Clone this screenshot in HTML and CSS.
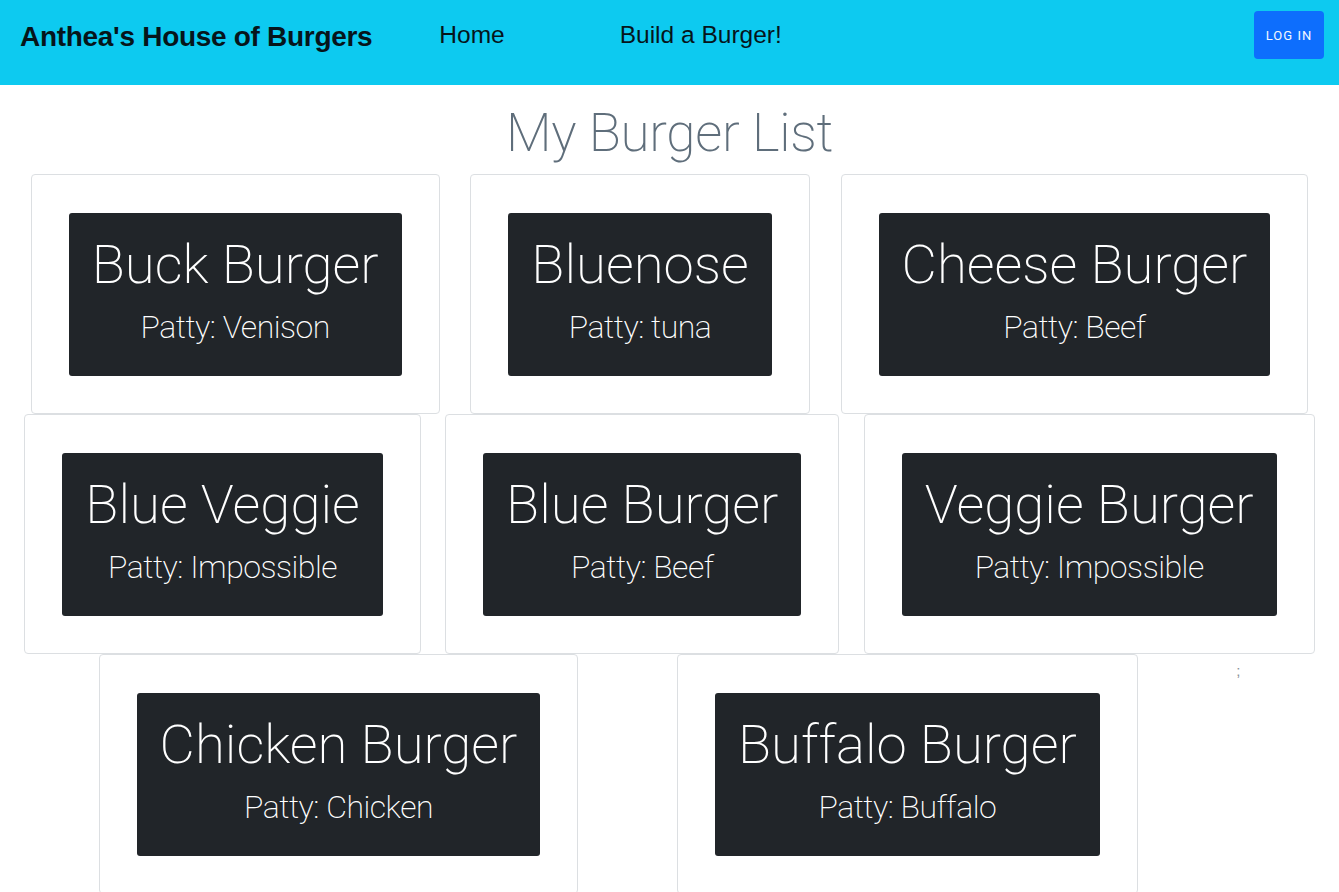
FILE: index.html
```html
<!DOCTYPE html>
<html lang="en">
<head>
<meta charset="utf-8">
<title>Anthea's House of Burgers</title>
<link rel="stylesheet" href="styles.css">
</head>
<body>
<nav class="navbar">
  <a class="brand" href="#">Anthea's House of Burgers</a>
  <ul class="nav-links">
    <li><a href="#" class="nav-link home">Home</a></li>
    <li><a href="#" class="nav-link">Build a Burger!</a></li>
  </ul>
  <button class="login">Log in</button>
</nav>
<main>
  <h1 class="page-title">My Burger List</h1>
  <div class="burger-list">
    <div class="card"><div class="burger"><h2 class="burger-name">Buck Burger</h2><p class="patty">Patty: Venison</p></div></div>
    <div class="card"><div class="burger"><h2 class="burger-name">Bluenose</h2><p class="patty">Patty: tuna</p></div></div>
    <div class="card"><div class="burger"><h2 class="burger-name">Cheese Burger</h2><p class="patty">Patty: Beef</p></div></div>
    <div class="card"><div class="burger"><h2 class="burger-name">Blue Veggie</h2><p class="patty">Patty: Impossible</p></div></div>
    <div class="card"><div class="burger"><h2 class="burger-name">Blue Burger</h2><p class="patty">Patty: Beef</p></div></div>
    <div class="card"><div class="burger"><h2 class="burger-name">Veggie Burger</h2><p class="patty">Patty: Impossible</p></div></div>
    <div class="card"><div class="burger"><h2 class="burger-name">Chicken Burger</h2><p class="patty">Patty: Chicken</p></div></div>
    <div class="card"><div class="burger"><h2 class="burger-name">Buffalo Burger</h2><p class="patty">Patty: Buffalo</p></div></div>
    <span class="stray">;</span>
  </div>
</main>
</body>
</html>
```

FILE: styles.css
```css
* { box-sizing: border-box; }

html, body {
  margin: 0;
  padding: 0;
  background: #fff;
  font-family: "Liberation Sans", Arial, sans-serif;
  color: #212529;
}

.navbar {
  display: flex;
  align-items: flex-start;
  height: 85px;
  background: #0dcaf0;
  padding: 11px 15px 0 20px;
}

.brand {
  font-size: 28px;
  font-weight: 700;
  color: #06151b;
  text-decoration: none;
  line-height: 1;
  margin-top: 12px;
  letter-spacing: -0.3px;
}

.nav-links {
  display: flex;
  list-style: none;
  margin: 0 0 0 67px;
  padding: 0;
  gap: 115px;
}

.nav-link {
  display: block;
  font-size: 24.5px;
  color: #06151b;
  text-decoration: none;
  line-height: 1;
  margin-top: 12px;
}

.login {
  margin-left: auto;
  width: 70px;
  height: 48px;
  background: #0d6efd;
  color: #f4f8ff;
  border: none;
  border-radius: 4px;
  font-family: Roboto, "Liberation Sans", sans-serif;
  font-size: 13px;
  font-weight: 400;
  letter-spacing: 1px;
  text-transform: uppercase;
  padding: 0;
}

.page-title {
  margin: 8px 0 0;
  text-align: center;
  font-family: Roboto, "Liberation Sans", sans-serif;
  font-weight: 200;
  font-size: 53px;
  line-height: 81px;
  color: #5f6e7b;
  letter-spacing: -0.3px;
}

.burger-list {
  display: flex;
  flex-wrap: wrap;
  justify-content: space-evenly;
  align-items: flex-start;
}

.card {
  border: 1px solid #dcdfe2;
  border-radius: 4px;
  padding: 38px 37px 37px;
}

.burger {
  background: #212529;
  color: #fff;
  border-radius: 3px;
  padding: 17px 23px 20px;
  text-align: center;
  font-family: Roboto, "Liberation Sans", sans-serif;
  font-weight: 200;
}

.burger-name {
  margin: 0;
  font-size: 54.5px;
  font-weight: 200;
  line-height: 68px;
  letter-spacing: 0;
}

.patty {
  margin: 0;
  font-size: 32px;
  line-height: 58px;
  letter-spacing: -0.5px;
}

.stray {
  margin-top: 8px;
  font-size: 15px;
  color: #8a9099;
}
```
